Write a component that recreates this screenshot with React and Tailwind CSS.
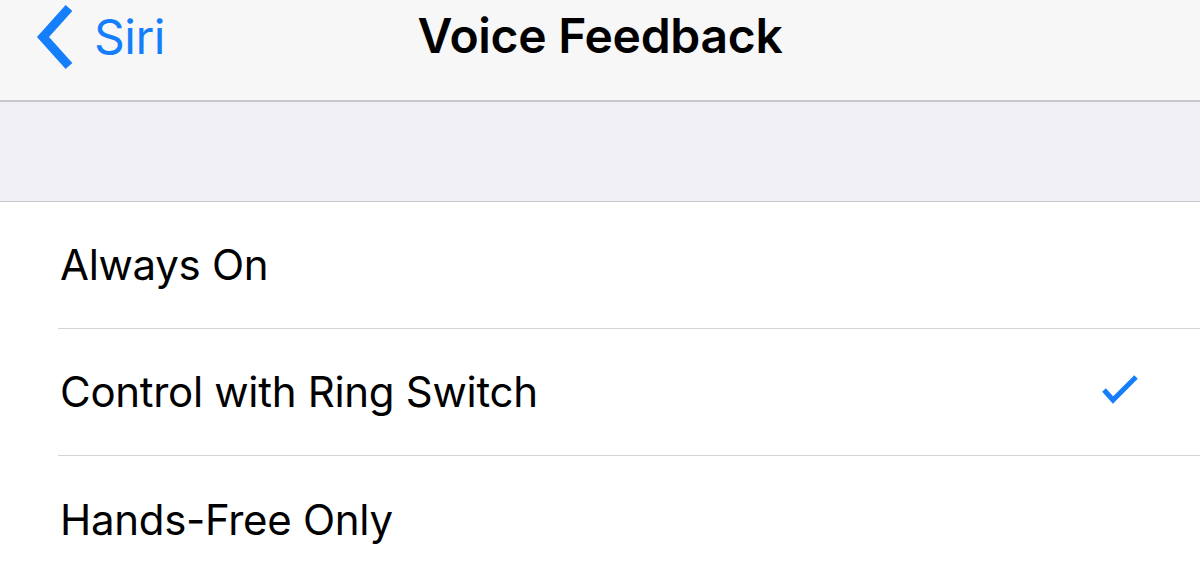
export default function App() {
  const rows = [
    { label: "Always On", checked: false },
    { label: "Control with Ring Switch", checked: true },
    { label: "Hands-Free Only", checked: false },
  ];
  return (
    <div className="w-[1200px] h-[572px] overflow-hidden bg-white" style={{ fontFamily: "Inter, 'Noto Sans', sans-serif" }}>
      <div className="h-[100px] bg-[#f7f7f8] flex items-center relative">
        <div className="flex items-center pl-[36px] h-full text-[#157efb] -translate-y-[13px]">
          <svg width="40" height="64" viewBox="0 0 40 64">
            <path d="M33 3 L7 32 L33 61" fill="none" stroke="#157efb" strokeWidth="9" strokeLinecap="butt" strokeLinejoin="miter" />
          </svg>
          <span className="ml-[18px] text-[48px] leading-none tracking-[-0.5px]">Siri</span>
        </div>
        <div className="absolute inset-x-0 top-0 h-full flex items-center justify-center pointer-events-none -translate-y-[14px]">
          <span className="text-[48px] font-semibold leading-none text-black tracking-[-0.3px]">Voice Feedback</span>
        </div>
      </div>
      <div className="h-[2px] bg-[#c8c7cc]" />
      <div className="h-[100px] bg-[#efeff4] border-b border-[#c8c7cc]" />
      <div className="bg-white">
        {rows.map((r, i) => (
          <div key={r.label} className="pl-[58px]">
            <div className={`h-[127px] flex items-center justify-between pr-[60px] ${i < rows.length - 1 ? "border-b border-[#d4d4d8]" : ""}`}>
              <span className="text-[42px] text-black leading-none ml-[2px] tracking-[-0.3px]">{r.label}</span>
              {r.checked && (
                <svg width="40" height="32" viewBox="0 0 40 32" className="mt-[-2px]">
                  <path d="M4 15 L13 25 L36 2" fill="none" stroke="#157efb" strokeWidth="5" />
                </svg>
              )}
            </div>
          </div>
        ))}
      </div>
    </div>
  );
}
